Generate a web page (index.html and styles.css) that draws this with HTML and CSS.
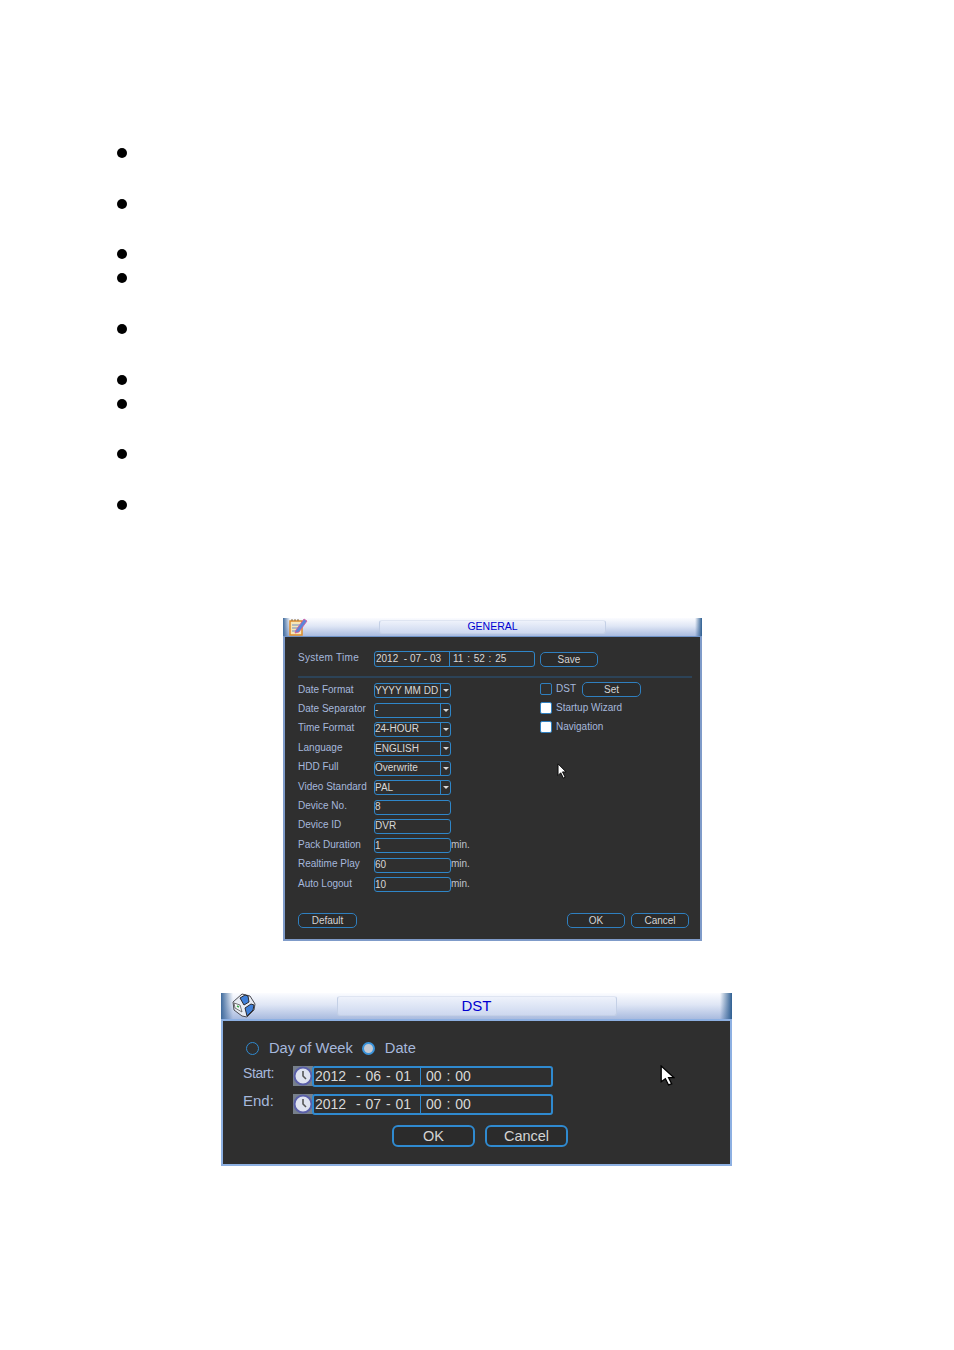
FILE: index.html
```html
<!DOCTYPE html>
<html lang="en">
<head>
  <meta charset="UTF-8">
  <title>General settings</title>
  <link rel="stylesheet" href="styles.css">
</head>
<body>

<ul class="bullets">
  <li class="far"></li>
  <li class="mid"></li>
  <li class="near"></li>
  <li class="far"></li>
  <li class="far"></li>
  <li class="near"></li>
  <li class="mid"></li>
  <li class="far"></li>
  <li></li>
</ul>

<div class="dialog general">
  <div class="titlebar">
    <svg class="title-icon" viewBox="0 0 20 18">
      <path d="M2 3h12v14H2z" fill="#f6e6b8" stroke="#dd8c2a" stroke-width="1.5"/>
      <path d="M4 3V1M7 3V1M10 3V1" stroke="#8a6a3a" stroke-width="1"/>
      <path d="M4 7h8M4 10h7M4 13h5" stroke="#6f8fc4" stroke-width="1"/>
      <path d="M8 12 16 1l3 2-8 11-4 1z" fill="#5a86d8" stroke="#d8569a" stroke-width=".8"/>
    </svg>
    <div class="title-tab">GENERAL</div>
  </div>
  <div class="panel">
    <div class="system-row">
      <span class="label">System Time</span>
      <div class="field time-field">
        <span class="date-part">2012  - 07 - 03</span>
        <span class="clock-part">11 : 52 : 25</span>
      </div>
      <button class="btn save-btn">Save</button>
    </div>
    <div class="divider"></div>
    <div class="settings">
      <div class="left-col">
        <div class="row"><span class="label">Date Format</span><div class="field select"><span>YYYY MM DD</span><i class="arrow"></i></div></div>
        <div class="row"><span class="label">Date Separator</span><div class="field select"><span>-</span><i class="arrow"></i></div></div>
        <div class="row"><span class="label">Time Format</span><div class="field select"><span>24-HOUR</span><i class="arrow"></i></div></div>
        <div class="row"><span class="label">Language</span><div class="field select"><span>ENGLISH</span><i class="arrow"></i></div></div>
        <div class="row"><span class="label">HDD Full</span><div class="field select"><span>Overwrite</span><i class="arrow"></i></div></div>
        <div class="row"><span class="label">Video Standard</span><div class="field select"><span>PAL</span><i class="arrow"></i></div></div>
        <div class="row"><span class="label">Device No.</span><div class="field"><span>8</span></div></div>
        <div class="row"><span class="label">Device ID</span><div class="field"><span>DVR</span></div></div>
        <div class="row"><span class="label">Pack Duration</span><div class="field"><span>1</span></div><span class="unit">min.</span></div>
        <div class="row"><span class="label">Realtime Play</span><div class="field"><span>60</span></div><span class="unit">min.</span></div>
        <div class="row"><span class="label">Auto Logout</span><div class="field"><span>10</span></div><span class="unit">min.</span></div>
      </div>
      <div class="right-col">
        <div class="check-row"><i class="check"></i><span class="label">DST</span><button class="btn set-btn">Set</button></div>
        <div class="check-row"><i class="check on"></i><span class="label">Startup Wizard</span></div>
        <div class="check-row"><i class="check on"></i><span class="label">Navigation</span></div>
      </div>
    </div>
    <div class="footer">
      <button class="btn default-btn">Default</button>
      <div class="footer-right">
        <button class="btn">OK</button>
        <button class="btn">Cancel</button>
      </div>
    </div>
    <svg class="cursor cursor-small" viewBox="0 0 12 18">
      <path d="M1 1v13l3-3 3 6 2-1-3-6h4z" fill="#fff" stroke="#000" stroke-width="1"/>
    </svg>
  </div>
</div>

<div class="dialog dst">
  <div class="titlebar">
    <svg class="title-icon" viewBox="0 0 26 25">
      <path d="M2 9 11 1l8 2 5 8-1 6-7 7-5-1-8-6z" fill="#e8ecf4" stroke="#4a4a50" stroke-width="1"/>
      <path d="M9 5l5-3 3 1 1 6-5 3zM14 15l6-4 3 1-1 5-6 6z" fill="#3f7fd8" stroke="#2a2a30" stroke-width="1"/>
      <path d="M3 10l6 2 2 7-7-4z" fill="#f4f6fa" stroke="#555" stroke-width=".8"/>
      <path d="M6 13l2 1" stroke="#3cb04c" stroke-width="1.4"/>
    </svg>
    <div class="title-tab">DST</div>
  </div>
  <div class="panel">
    <div class="radio-row">
      <i class="radio"></i><span class="label first">Day of Week</span>
      <i class="radio on"></i><span class="label">Date</span>
    </div>
    <div class="range-row">
      <span class="label start">Start:</span>
      <svg class="clock" viewBox="0 0 20 20">
        <rect width="20" height="20" fill="#77808c"/>
        <circle cx="10" cy="10" r="8.5" fill="#dfe3f0" stroke="#5a5fa8" stroke-width="2"/>
        <path d="M10 5v5l3 3" fill="none" stroke="#555" stroke-width="1.6"/>
      </svg>
      <div class="field range-field"><span class="date-part">2012  - 06 - 01</span><span class="clock-part">00 : 00</span></div>
    </div>
    <div class="range-row">
      <span class="label">End:</span>
      <svg class="clock" viewBox="0 0 20 20">
        <rect width="20" height="20" fill="#77808c"/>
        <circle cx="10" cy="10" r="8.5" fill="#dfe3f0" stroke="#5a5fa8" stroke-width="2"/>
        <path d="M10 5v5l3 3" fill="none" stroke="#555" stroke-width="1.6"/>
      </svg>
      <div class="field range-field"><span class="date-part">2012  - 07 - 01</span><span class="clock-part">00 : 00</span></div>
    </div>
    <div class="dst-buttons">
      <button class="btn">OK</button>
      <button class="btn">Cancel</button>
    </div>
    <svg class="cursor cursor-large" viewBox="0 0 14 20">
      <path d="M1 1v15l4-3 3 6 3-1-3-6h5z" fill="#fff" stroke="#000" stroke-width="1.2"/>
    </svg>
  </div>
</div>

</body>
</html>
```

FILE: styles.css
```css
* { box-sizing: border-box; }
body {
  margin: 0;
  background: #fff;
  font-family: "Liberation Sans", Arial, sans-serif;
}

/* bullet list, the text next to the dots is blank in the source */
.bullets {
  list-style: none;
  margin: 0;
  padding: 148px 0 0 117px;
}
.bullets li {
  width: 10px;
  height: 10px;
  border-radius: 50%;
  background: #000;
}
.bullets .far { margin-bottom: 41px; }
.bullets .mid { margin-bottom: 40px; }
.bullets .near { margin-bottom: 14px; }

.dialog {
  background: #2f2f2f;
}
.general {
  width: 419px;
  height: 323px;
  margin: 108px 0 0 283px;
  display: flex;
  flex-direction: column;
}
.dst {
  width: 511px;
  height: 173px;
  margin: 52px 0 0 221px;
  display: flex;
  flex-direction: column;
}

.titlebar {
  position: relative;
  display: flex;
  justify-content: center;
  flex-shrink: 0;
  background:
    linear-gradient(90deg, #3f6a9c 0, rgba(63, 106, 156, 0) var(--edge), rgba(63, 106, 156, 0) calc(100% - var(--edge)), #2f5f92 100%),
    linear-gradient(180deg, #fbfcff 0, #dfe6f5 45%, #a9bbdf 100%);
}
.general .titlebar { --edge: 7px; height: 18px; padding-top: 2px; }
.dst .titlebar { --edge: 12px; height: 26px; padding-top: 3px; }
.title-tab {
  border: 1px solid #c4d0e6;
  border-top-color: #dfe5f2;
  border-radius: 3px;
  text-align: center;
  color: #0000d0;
  background: linear-gradient(180deg, #eef2fb, #cdd8ef);
}
.general .title-tab {
  width: 227px;
  height: 14px;
  font-size: 10.5px;
  line-height: 11px;
}
.dst .title-tab {
  width: 280px;
  height: 20px;
  font-size: 15px;
  line-height: 18px;
}
.title-icon { position: absolute; }
.general .title-icon { left: 5px; top: 0; width: 20px; height: 18px; }
.dst .title-icon { left: 10px; top: 0; width: 26px; height: 25px; }

.panel {
  position: relative;
  flex: 1;
  border: 2px solid #7f9bc9;
  border-top-color: #6f93c8;
  background: #2f2f2f;
}
.general .panel {
  border-width: 1px 2px 2px;
  padding: 14px 8px 11px 13px;
  display: flex;
  flex-direction: column;
}
.dst .panel {
  border-color: #8db0e2;
  padding: 17px 0 0 23px;
}

.label {
  font-size: 10px;
  color: #a6b8dc;
  white-space: pre;
}
.field {
  display: flex;
  align-items: center;
  border: 1px solid #2f86c8;
  border-radius: 3px;
  color: #d8d8d8;
  font-size: 10px;
  white-space: pre;
}
.btn {
  border: 1px solid #2f7fbf;
  border-radius: 5px;
  background: #2b2b2b;
  color: #d4d4d4;
  font-family: inherit;
  font-size: 10px;
  padding: 0 0 1px;
}

.system-row {
  display: flex;
  align-items: center;
  height: 16px;
}
.system-row .label {
  width: 76px;
  margin-top: -4px;
  letter-spacing: .3px;
}
.time-field {
  width: 161px;
  height: 16px;
}
.time-field .date-part {
  width: 75px;
  height: 100%;
  padding-left: 1px;
  line-height: 13px;
  border-right: 1px solid #2f86c8;
}
.time-field .clock-part {
  padding-left: 3px;
  line-height: 13px;
  margin-top: -1px;
  word-spacing: 1px;
}
.save-btn {
  width: 58px;
  height: 15px;
  margin-left: 5px;
  margin-top: 1px;
}
.divider {
  height: 2px;
  margin: 9px 0 3px 0;
  background: #2c4358;
}

.settings {
  display: flex;
}
.left-col { width: 242px; }
.right-col { margin-top: -2px; }
.row {
  display: flex;
  align-items: center;
  height: 19.4px;
}
.row .label {
  width: 76px;
  margin-top: -3px;
}
.row .field {
  width: 77px;
  height: 15px;
}
.row .field span { margin-top: -1px; }
.unit {
  font-size: 10px;
  color: #c0c4cc;
  margin-top: -3px;
}
.select { justify-content: space-between; }
.arrow {
  position: relative;
  width: 10px;
  height: 100%;
  border-left: 1px solid #2f86c8;
}
.arrow::after {
  content: "";
  position: absolute;
  top: 5px;
  left: 2px;
  border: 3px solid transparent;
  border-top: 3px solid #d8d8d8;
  border-bottom: 0;
}

.check-row {
  display: flex;
  align-items: center;
  height: 19.4px;
}
.check {
  width: 12px;
  height: 12px;
  border: 1px solid #2f7fbf;
  border-radius: 2px;
  margin-right: 4px;
}
.check.on {
  background: #fff;
}
.check-row .label { margin-top: -1px; }
.set-btn {
  width: 59px;
  height: 15px;
  margin-left: 6px;
  margin-top: 2px;
}

.footer {
  display: flex;
  justify-content: space-between;
  margin-top: auto;
}
.footer .btn {
  width: 58px;
  height: 15px;
}
.footer .default-btn { width: 59px; }
.footer-right {
  display: flex;
  gap: 6px;
  padding-right: 3px;
}

.radio-row {
  display: flex;
  align-items: center;
  height: 20px;
}
.radio {
  width: 13px;
  height: 13px;
  border: 1.5px solid #2f8ad0;
  border-radius: 50%;
}
.radio.on {
  background: #c4c9d2;
  border: 2.5px solid #3a94dc;
}
.radio-row .label {
  font-size: 14.7px;
  margin-left: 10px;
}
.radio-row .first { margin-right: 9px; }

.range-row {
  display: flex;
  align-items: center;
  height: 20px;
  margin-top: 8px;
}
.range-row .label {
  width: 50px;
  font-size: 15px;
  margin: -7px 0 0 -3px;
}
.range-row .start {
  font-size: 14px;
  letter-spacing: -.4px;
}
.clock {
  width: 20px;
  height: 20px;
}
.range-field {
  width: 241px;
  height: 21px;
  margin-left: -1px;
  border: 2px solid #2f8ad0;
  font-size: 14px;
}
.range-field .date-part {
  width: 107px;
  height: 100%;
  padding-left: 1px;
  line-height: 17px;
  word-spacing: 1px;
  border-right: 1px solid #2f8ad0;
}
.range-field .clock-part {
  padding-left: 5px;
  word-spacing: 1px;
}

.dst-buttons {
  display: flex;
  gap: 10px;
  margin: 11px 0 0 146px;
}
.dst-buttons .btn {
  width: 83px;
  height: 22px;
  border: 2px solid #2f8ad0;
  border-radius: 6px;
  font-size: 14.5px;
}

/* mouse pointers caught in the screenshots */
.cursor { position: absolute; }
.cursor-small {
  left: 272px;
  top: 126px;
  width: 11px;
  height: 16px;
}
.cursor-large {
  left: 437px;
  top: 44px;
  width: 15px;
  height: 21px;
}
```
